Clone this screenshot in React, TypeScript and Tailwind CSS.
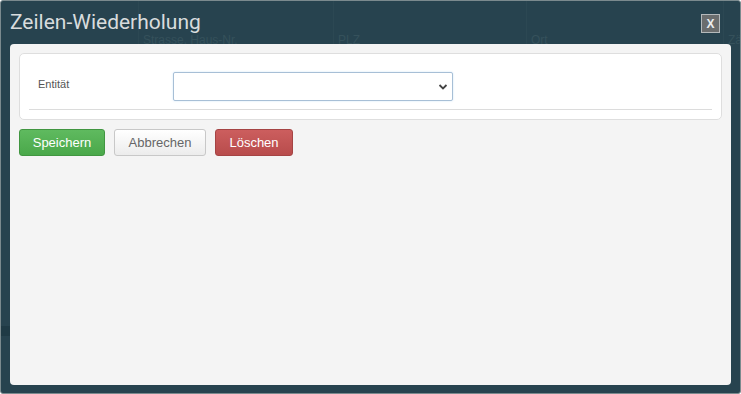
import React from 'react'

const COLS = [
  { x: 137, label: 'Strasse, Haus-Nr.' },
  { x: 332, label: 'PLZ' },
  { x: 525, label: 'Ort' },
  { x: 722, label: 'Zähler' },
]

export default function App() {
  return (
    <div className="relative w-[741px] h-[394px] overflow-hidden rounded-[3px] border border-[#7b8a8e] bg-[#27434f] font-['Liberation_Sans',Arial,sans-serif]">
      {/* table behind the dialog, showing through */}
      <div className="absolute inset-0 pointer-events-none">
        {COLS.map((c) => (
          <div key={c.label} className="absolute top-0 h-[44px] border-l border-[#2c4853]" style={{ left: c.x }}>
            <span className="absolute left-[4px] top-[30px] whitespace-nowrap text-[12px] text-[#35515b]">{c.label}</span>
          </div>
        ))}
        <div className="absolute left-0 top-[325px] h-[10px] w-[9px] bg-[#1f3a45]" />
      </div>

      <div className="relative flex h-full flex-col pb-[8px]">
        {/* title bar */}
        <div className="flex h-[43px] items-start justify-between pl-[9px] pr-[20px]">
          <h1 className="mt-[8px] font-['Roboto',sans-serif] text-[21px] leading-[27px] text-[#d8dcdd]">
            Zeilen-Wiederholung
          </h1>
          <button className="mt-[13px] flex h-[19px] w-[19px] items-center justify-center border border-[#b4b9bb] bg-[#6a6d6e] text-[12px] font-bold leading-none text-[#eceeee]">
            X
          </button>
        </div>

        {/* content */}
        <div className="mx-[9px] flex-1 rounded-[4px] bg-[#f4f4f4] p-[9px]">
          <div className="rounded-[5px] border border-[#dedede] bg-white px-[9px] pt-[18px] pb-[9px]">
            <div className="flex items-center pb-[8px]">
              <label className="mb-[5px] w-[144px] pl-[9px] text-[11px] text-[#555]">Entität</label>
              <div className="relative h-[29px] w-[280px] rounded-[2px] border border-[#a7bfd6] bg-white shadow-[0_0_2px_rgba(102,175,233,0.35)]">
                <svg className="absolute right-[4px] top-[10px]" width="10" height="8" viewBox="0 0 10 8">
                  <path d="M1.5 2 L5 5.5 L8.5 2" fill="none" stroke="#444" strokeWidth="1.8" />
                </svg>
              </div>
            </div>
            <div className="border-t border-[#dcdcdc]" />
          </div>

          <div className="mt-[9px] flex gap-[9px]">
            <button className="h-[27px] w-[86px] rounded-[3px] border border-[#419641] bg-gradient-to-b from-[#5fba5f] to-[#4aa84a] text-[13px] text-white">
              Speichern
            </button>
            <button className="h-[27px] w-[92px] rounded-[3px] border border-[#c8c8c8] bg-gradient-to-b from-white to-[#ececec] text-[13px] text-[#666]">
              Abbrechen
            </button>
            <button className="h-[27px] w-[78px] rounded-[3px] border border-[#a54444] bg-gradient-to-b from-[#cc5e5e] to-[#b84c4c] text-[13px] text-white">
              Löschen
            </button>
          </div>
        </div>
      </div>
    </div>
  )
}
